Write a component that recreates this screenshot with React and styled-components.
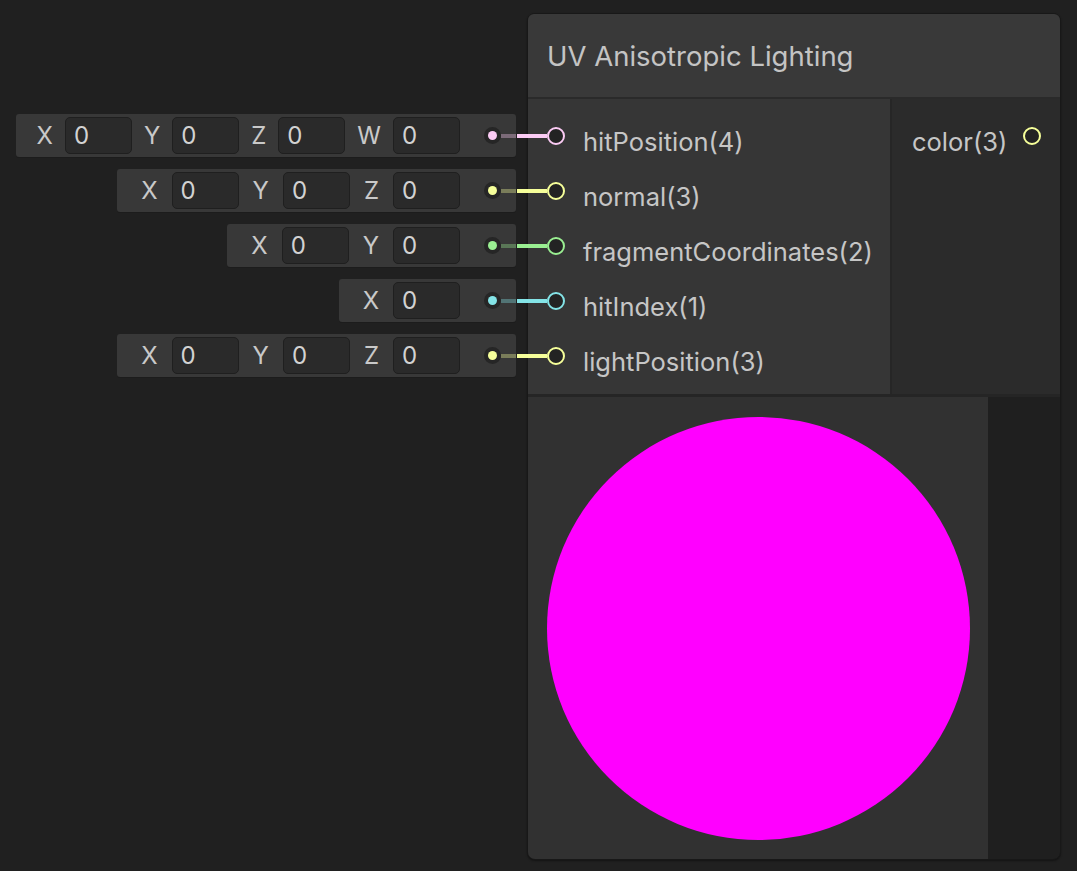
import React from 'react'
import styled, { createGlobalStyle } from 'styled-components'

const GlobalStyle = createGlobalStyle`
  html, body {
    margin: 0;
    padding: 0;
    background: #202020;
    font-family: Inter, "Noto Sans", sans-serif;
  }
`

const Canvas = styled.div`
  display: flex;
  align-items: flex-start;
  width: 1077px;
  height: 871px;
  overflow: hidden;
  background: #202020;
`

const InlineColumn = styled.div`
  width: 527px;
  flex: none;
  padding-top: 108px;
  display: flex;
  flex-direction: column;
`

const InlineRow = styled.div`
  height: 55px;
  display: flex;
  align-items: center;
  justify-content: flex-end;
  padding-right: 11px;
`

const InlineBox = styled.div`
  height: 43px;
  display: flex;
  align-items: center;
  padding-left: ${({ dense }) => (dense ? 9 : 10)}px;
  background: #383838;
  border-radius: 3px;
  box-shadow: 0 1px 0 #1c1c1c;
`

const Axis = styled.span`
  padding: 0 ${({ dense }) => (dense ? 12 : 14)}px;
  font-size: 24px;
  color: #c9c9c9;
  line-height: 1;
`

const Field = styled.div`
  width: 67px;
  height: 37px;
  box-sizing: border-box;
  display: flex;
  align-items: center;
  padding-left: 8px;
  background: #2a2a2a;
  border: 1px solid #1f1f1f;
  border-radius: 5px;
  font-size: 24px;
  color: #d2d2d2;
`

const Stub = styled.div`
  display: flex;
  align-items: center;
  margin-left: 24px;
`

const Dot = styled.div`
  width: 17px;
  height: 17px;
  border-radius: 50%;
  background: #262626;
  display: flex;
  align-items: center;
  justify-content: center;

  &::after {
    content: '';
    width: 9px;
    height: 9px;
    border-radius: 50%;
    background: ${({ color }) => color};
  }
`

const StubLine = styled.div`
  width: 15px;
  height: 4px;
  background: ${({ color }) => color};
  opacity: 0.35;
`

const Node = styled.div`
  margin-top: 13px;
  width: 534px;
  box-sizing: border-box;
  border: 1px solid #181818;
  border-radius: 8px;
  background: #1f1f1f;
  display: flex;
  flex-direction: column;
  box-shadow: 0 1px 2px rgba(0, 0, 0, 0.4);
`

const Header = styled.div`
  height: 83px;
  display: flex;
  align-items: center;
  padding-left: 19px;
  background: #393939;
  border-bottom: 2px solid #2a2a2a;
  border-radius: 6px 6px 0 0;
  font-size: 27.5px;
  color: #c4c4c4;
`

const Body = styled.div`
  display: flex;
  border-bottom: 3px solid #252525;
`

const Inputs = styled.div`
  width: 362px;
  flex: none;
  padding: 9px 0 11px;
  background: #363636;
  border-right: 2px solid #262626;
`

const Outputs = styled.div`
  flex: 1;
  padding: 9px 0 11px;
  background: #2b2b2b;
`

const PortRow = styled.div`
  height: 55px;
  display: flex;
  align-items: center;
`

const Wire = styled.div`
  width: 30px;
  height: 4px;
  margin-left: -11px;
  background: ${({ color }) => color};
`

const Ring = styled.div`
  width: 18px;
  height: 18px;
  box-sizing: border-box;
  border-radius: 50%;
  border: 2px solid ${({ color }) => color};
  background: #232323;
  flex: none;
`

const PortLabel = styled.span`
  margin-left: ${({ gap }) => gap}px;
  padding-top: 11px;
  font-size: 25.5px;
  color: #c6c6c6;
`

const OutputRow = styled(PortRow)`
  padding-left: 20px;
  padding-right: 19px;
  justify-content: space-between;
`

const Preview = styled.div`
  width: 460px;
  height: 462px;
  display: flex;
  align-items: center;
  justify-content: center;
  background: #313131;
  border-radius: 0 0 0 7px;
`

const Sphere = styled.div`
  width: 423px;
  height: 423px;
  border-radius: 50%;
  background: #ff00ff;
`

const COLORS = {
  1: '#84e4e7',
  2: '#9aef92',
  3: '#f6ff9a',
  4: '#fbcbf4',
}

const inputs = [
  { name: 'hitPosition', axes: ['X', 'Y', 'Z', 'W'] },
  { name: 'normal', axes: ['X', 'Y', 'Z'] },
  { name: 'fragmentCoordinates', axes: ['X', 'Y'] },
  { name: 'hitIndex', axes: ['X'] },
  { name: 'lightPosition', axes: ['X', 'Y', 'Z'] },
]

const App = () => (
  <>
    <GlobalStyle />
    <Canvas>
      <InlineColumn>
        {inputs.map((input) => {
          const color = COLORS[input.axes.length]
          const dense = input.axes.length > 3
          return (
            <InlineRow key={input.name}>
              <InlineBox dense={dense}>
                {input.axes.map((axis) => (
                  <React.Fragment key={axis}>
                    <Axis dense={dense}>{axis}</Axis>
                    <Field>0</Field>
                  </React.Fragment>
                ))}
                <Stub>
                  <Dot color={color} />
                  <StubLine color={color} />
                </Stub>
              </InlineBox>
            </InlineRow>
          )
        })}
      </InlineColumn>
      <Node>
        <Header>UV Anisotropic Lighting</Header>
        <Body>
          <Inputs>
            {inputs.map((input) => {
              const color = COLORS[input.axes.length]
              return (
                <PortRow key={input.name}>
                  <Wire color={color} />
                  <Ring color={color} />
                  <PortLabel gap={18}>
                    {input.name}({input.axes.length})
                  </PortLabel>
                </PortRow>
              )
            })}
          </Inputs>
          <Outputs>
            <OutputRow>
              <PortLabel gap={0}>color(3)</PortLabel>
              <Ring color={COLORS[3]} />
            </OutputRow>
          </Outputs>
        </Body>
        <Preview>
          <Sphere />
        </Preview>
      </Node>
    </Canvas>
  </>
)

export default App
